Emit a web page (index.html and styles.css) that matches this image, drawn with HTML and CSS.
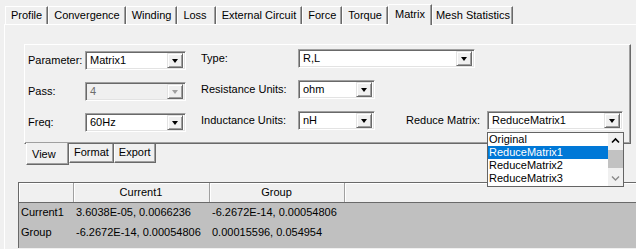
FILE: index.html
```html
<!DOCTYPE html>
<html lang="en">
<head>
  <meta charset="UTF-8">
  <title>Matrix</title>
  <link rel="stylesheet" href="styles.css">
</head>
<body>
  <div class="tabs">
    <div class="tab">Profile</div>
    <div class="tab">Convergence</div>
    <div class="tab">Winding</div>
    <div class="tab loss">Loss</div>
    <div class="tab">External Circuit</div>
    <div class="tab">Force</div>
    <div class="tab">Torque</div>
    <div class="tab active">Matrix</div>
    <div class="tab mesh">Mesh Statistics</div>
  </div>

  <div class="page">
    <div class="group">
      <div class="row">
        <span class="lbl lbl-left">Parameter:</span>
        <div class="combo combo-left"><span class="val">Matrix1</span><span class="btn"><i class="arrow"></i></span></div>
        <span class="lbl lbl-right">Type:</span>
        <div class="combo combo-type"><span class="val">R,L</span><span class="btn"><i class="arrow"></i></span></div>
      </div>
      <div class="row">
        <span class="lbl lbl-left">Pass:</span>
        <div class="combo combo-left disabled"><span class="val">4</span><span class="btn"><i class="arrow"></i></span></div>
        <span class="lbl lbl-right">Resistance Units:</span>
        <div class="combo combo-unit"><span class="val">ohm</span><span class="btn"><i class="arrow"></i></span></div>
      </div>
      <div class="row">
        <span class="lbl lbl-left">Freq:</span>
        <div class="combo combo-left"><span class="val">60Hz</span><span class="btn"><i class="arrow"></i></span></div>
        <span class="lbl lbl-right">Inductance Units:</span>
        <div class="combo combo-unit"><span class="val">nH</span><span class="btn"><i class="arrow"></i></span></div>
        <span class="lbl lbl-reduce">Reduce Matrix:</span>
        <div class="reduce">
          <div class="combo combo-reduce"><span class="val">ReduceMatrix1</span><span class="btn"><i class="arrow"></i></span></div>
          <!-- open drop-down list -->
          <div class="list">
            <div class="items">
              <div class="item">Original</div>
              <div class="item selected">ReduceMatrix1</div>
              <div class="item">ReduceMatrix2</div>
              <div class="item">ReduceMatrix3</div>
            </div>
            <div class="scroll">
              <svg class="sbtn" width="15" height="16" viewBox="0 0 15 16"><polyline points="4,9.5 7.5,6 11,9.5" fill="none" stroke="#000" stroke-width="1.6"/></svg>
              <div class="thumb"></div>
              <div class="track"></div>
              <svg class="sbtn" width="15" height="16" viewBox="0 0 15 16"><polyline points="4,6.5 7.5,10 11,6.5" fill="none" stroke="#8a8a8a" stroke-width="1.4"/></svg>
            </div>
          </div>
        </div>
      </div>
    </div>

    <div class="subtabs">
      <div class="subtab active">View</div>
      <div class="subtab">Format</div>
      <div class="subtab">Export</div>
    </div>

    <div class="grid-wrap">
      <table class="grid">
        <tr>
          <th class="c0"></th>
          <th class="c1">Current1</th>
          <th class="c2">Group</th>
          <th></th>
        </tr>
        <tr>
          <td class="rh">Current1</td>
          <td>3.6038E-05, 0.0066236</td>
          <td>-6.2672E-14, 0.00054806</td>
          <td></td>
        </tr>
        <tr>
          <td class="rh">Group</td>
          <td>-6.2672E-14, 0.00054806</td>
          <td>0.00015596, 0.054954</td>
          <td></td>
        </tr>
      </table>
    </div>
  </div>
</body>
</html>
```

FILE: styles.css
```css
* {
  box-sizing: border-box;
}
html, body {
  margin: 0;
  height: 100%;
  overflow: hidden;
}
body {
  background: #f0f0f0;
  font: 11px "Liberation Sans", Arial, sans-serif;
  color: #000;
}

/* top tab strip */
.tabs {
  display: flex;
  align-items: flex-end;
  height: 24px;
  padding-left: 5px;
  position: relative;
  z-index: 1;
}
.tab {
  height: 18px;
  padding: 0 5px;
  line-height: 17px;
  white-space: nowrap;
  background: #f0f0f0;
  border-top: 1px solid #fff;
  border-left: 1px solid #fff;
  border-right: 1px solid #696969;
  box-shadow: inset -1px 0 #a0a0a0;
}
.tab.loss {
  padding-right: 8px;
}
.tab.mesh {
  padding: 0 2px 0 3px;
}
.tab.active {
  height: 21px;
  margin-bottom: -1px;
  padding: 0 6px;
  line-height: 18px;
}

/* tab page */
.page {
  margin-left: 4px;
  height: 225px;
  border-top: 1px solid #fff;
  border-left: 1px solid #fff;
  padding: 19px 0 0 13px;
}
.group {
  width: 607px;
  height: 100px;
  margin-left: 6px;
  padding: 4px 0 0 3px;
  border: 1px solid;
  border-color: #fff #696969 #696969 #fff;
  box-shadow: inset -1px -1px #a0a0a0;
}
.row {
  display: flex;
  align-items: flex-start;
  height: 19px;
  margin-bottom: 12px;
}
.lbl {
  line-height: 19px;
  white-space: nowrap;
}
.lbl-left {
  width: 57px;
  margin-top: 2px;
}
.lbl-right {
  width: 97px;
}
.lbl-reduce {
  width: 81px;
  margin-left: 31px;
}

/* combo boxes */
.combo {
  display: flex;
  align-items: center;
  height: 19px;
  padding: 2px;
  background: #fff;
  border: 1px solid;
  border-color: #a0a0a0 #fff #fff #a0a0a0;
  box-shadow: inset 1px 1px #696969, inset -1px -1px #e3e3e3;
}
.combo-left {
  width: 101px;
  margin-top: 2px;
  margin-right: 15px;
}
.combo-type {
  width: 177px;
}
.combo-unit {
  width: 77px;
}
.combo-reduce {
  width: 136px;
}
.val {
  flex: 1;
  padding-left: 2px;
  line-height: 15px;
  white-space: nowrap;
}
.btn {
  width: 16px;
  height: 15px;
  display: flex;
  align-items: center;
  justify-content: center;
  background: #f0f0f0;
  border: 1px solid;
  border-color: #e3e3e3 #696969 #696969 #e3e3e3;
  box-shadow: inset 1px 1px #fff, inset -1px -1px #a0a0a0;
}
.arrow {
  width: 1px;
  height: 0;
  border-left: 3px solid transparent;
  border-right: 3px solid transparent;
  border-top: 4px solid #000;
}
.combo.disabled {
  background: #f0f0f0;
}
.combo.disabled .val {
  color: #6d6d6d;
}
.combo.disabled .arrow {
  border-top-color: #a0a0a0;
}

/* open list */
.reduce {
  position: relative;
}
.list {
  position: absolute;
  left: 0;
  top: 21px;
  width: 137px;
  height: 55px;
  display: flex;
  background: #fff;
  border: 1px solid #646464;
  z-index: 5;
}
.items {
  flex: 1;
}
.item {
  height: 13px;
  line-height: 13px;
  padding-left: 1px;
  white-space: nowrap;
}
.item.selected {
  background: #0078d7;
  color: #fff;
}
.scroll {
  width: 15px;
  display: flex;
  flex-direction: column;
  background: #f0f0f0;
}
.sbtn {
  display: block;
  flex: none;
}
.thumb {
  height: 18px;
  margin-top: 1px;
  background: #c2c2c2;
}
.track {
  flex: 1;
}

/* bottom tabs */
.subtabs {
  display: flex;
  align-items: flex-start;
  margin-left: 8px;
  height: 21px;
}
.subtab {
  height: 19px;
  padding: 0 4px;
  line-height: 17px;
  background: #f0f0f0;
  border-left: 1px solid #fff;
  border-right: 1px solid #696969;
  border-bottom: 1px solid #696969;
  box-shadow: inset -1px -1px #a0a0a0;
  white-space: nowrap;
}
.subtab.active {
  width: 43px;
  height: 22px;
  margin-top: -1px;
  padding: 4px 0 0 5px;
  line-height: 15px;
  position: relative;
}

/* result grid */
.grid-wrap {
  margin-top: 17px;
  width: 640px;
  height: 66px;
  background: #c0c0c0;
  border-left: 1px solid #696969;
  border-top: 1px solid #696969;
}
.grid {
  border-collapse: collapse;
  width: 100%;
}
.grid th {
  height: 19px;
  padding: 0;
  font-weight: normal;
  background: #f0f0f0;
  border-right: 1px solid #a0a0a0;
  border-bottom: 1px solid #696969;
  box-shadow: inset 1px 1px #fff;
}
.grid .c0 {
  width: 54px;
}
.grid .c1 {
  width: 136px;
}
.grid .c2 {
  width: 135px;
}
.grid td {
  height: 20px;
  padding: 0 3px;
  white-space: nowrap;
}
.grid td.rh {
  padding-left: 2px;
}
```
